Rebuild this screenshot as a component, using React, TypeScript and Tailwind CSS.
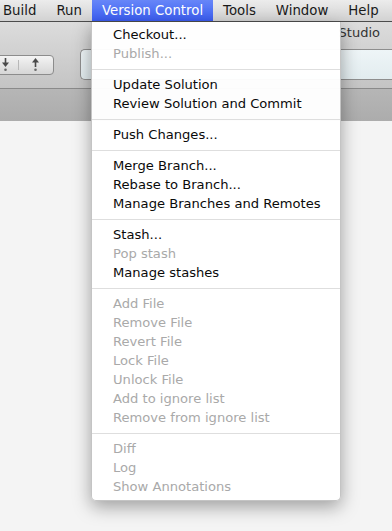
import React from 'react'

type Item = { label: string; enabled?: boolean } | 'sep'

const menuItems: Item[] = [
  { label: 'Checkout...', enabled: true },
  { label: 'Publish...' },
  'sep',
  { label: 'Update Solution', enabled: true },
  { label: 'Review Solution and Commit', enabled: true },
  'sep',
  { label: 'Push Changes...', enabled: true },
  'sep',
  { label: 'Merge Branch...', enabled: true },
  { label: 'Rebase to Branch...', enabled: true },
  { label: 'Manage Branches and Remotes', enabled: true },
  'sep',
  { label: 'Stash...', enabled: true },
  { label: 'Pop stash' },
  { label: 'Manage stashes', enabled: true },
  'sep',
  { label: 'Add File' },
  { label: 'Remove File' },
  { label: 'Revert File' },
  { label: 'Lock File' },
  { label: 'Unlock File' },
  { label: 'Add to ignore list' },
  { label: 'Remove from ignore list' },
  'sep',
  { label: 'Diff' },
  { label: 'Log' },
  { label: 'Show Annotations' },
]

const topMenus = ['Build', 'Run', 'Version Control', 'Tools', 'Window', 'Help']

function ArrowIcon({ up }: { up?: boolean }) {
  return (
    <svg width="9" height="15" viewBox="0 0 9 15">
      {up ? (
        <>
          <path d="M4.5 1 L8 5.5 L1 5.5 Z" fill="#4a4a4a" />
          <rect x="3.7" y="5" width="1.6" height="5" fill="#4a4a4a" />
        </>
      ) : (
        <>
          <rect x="3.7" y="1" width="1.6" height="5" fill="#4a4a4a" />
          <path d="M1 5.5 L8 5.5 L4.5 10 Z" fill="#4a4a4a" />
        </>
      )}
      <circle cx="4.5" cy="12.8" r="1.3" fill="#6a6a6a" />
    </svg>
  )
}

export default function App() {
  return (
    <div
      className="relative h-screen w-full overflow-hidden bg-[#f4f4f4]"
      style={{ fontFamily: '"DejaVu Sans", "Liberation Sans", sans-serif' }}
    >
      {/* menu bar */}
      <div className="flex h-[22px] items-center border-b border-[#4c4c4c] bg-gradient-to-b from-[#ececec] to-[#d2d2d2] text-[13.3px] text-[#1a1a1a]">
        <div className="ml-[-7px] flex h-full">
          {topMenus.map((m) => (
            <div
              key={m}
              className={
                m === 'Version Control'
                  ? 'flex h-full items-center bg-gradient-to-b from-[#6786f8] to-[#3b5cf1] px-[10px] text-white'
                  : 'flex h-full items-center px-[10px]'
              }
            >
              {m}
            </div>
          ))}
        </div>
      </div>

      {/* toolbar */}
      <div className="flex h-[67px] flex-col border-b border-[#8a8a8a] bg-gradient-to-b from-[#dcdcdc] to-[#c4c4c4]">
        <div className="flex h-[22px] items-center justify-end pr-[12px] text-[13px] text-[#333]">
          Studio
        </div>
        <div className="flex items-center pt-[5px]">
          <div className="ml-[-20px] flex h-[20px] w-[74px] items-center rounded-[4px] border border-[#8c8c8c] bg-gradient-to-b from-[#f4f4f4] to-[#d6d6d6]">
            <div className="flex w-[31px] justify-end pr-[2px]">
              <ArrowIcon />
            </div>
            <div className="mx-[6px] h-[10px] w-px bg-[#b8b8b8]" />
            <div className="flex w-[20px] justify-center">
              <ArrowIcon up />
            </div>
          </div>
          <div className="ml-[26px] h-[31px] flex-1 rounded-l-[5px] border border-r-0 border-[#8e8e8e] bg-gradient-to-b from-[#eef5f7] to-[#e2ecef]" />
        </div>
      </div>

      {/* pad band */}
      <div className="h-[32px] bg-gradient-to-b from-[#b6b6b6] to-[#acacac]" />

      {/* dropdown */}
      <div className="absolute left-[91px] top-[22px] w-[250px] rounded-b-[5px] border border-t-0 border-[#c4c4c4] bg-white/[0.97] pb-[4px] pt-[3px] text-[13.1px] shadow-[0_6px_18px_rgba(0,0,0,0.35)]">
        {menuItems.map((it, i) =>
          it === 'sep' ? (
            <div key={i} className="flex h-[12px] items-center">
              <div className="h-px w-full bg-[#dedede]" />
            </div>
          ) : (
            <div
              key={i}
              className={
                it.enabled
                  ? 'flex h-[19px] items-center pl-[21px] text-[#0a0a0a]'
                  : 'flex h-[19px] items-center pl-[21px] text-[#a9a9a9]'
              }
            >
              {it.label}
            </div>
          )
        )}
      </div>
    </div>
  )
}
